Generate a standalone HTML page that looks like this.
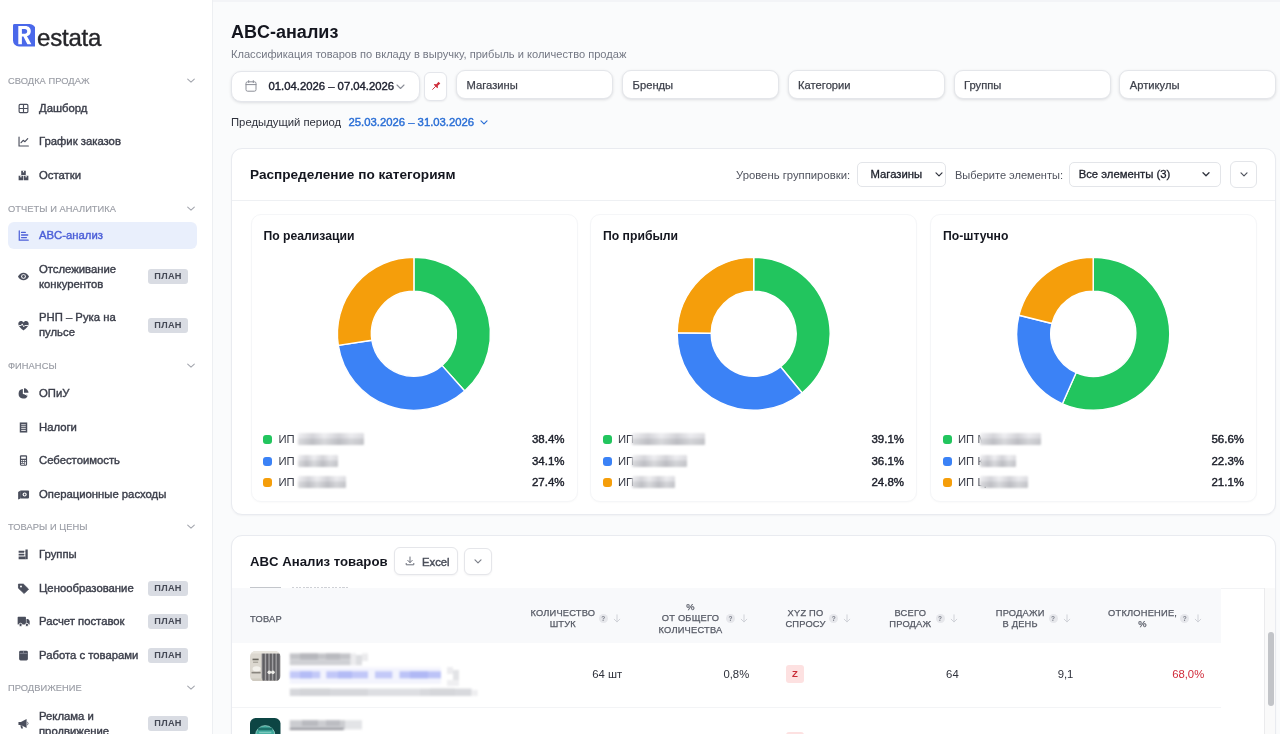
<!DOCTYPE html>
<html lang="ru">
<head>
<meta charset="utf-8">
<title>ABC-анализ</title>
<style>
*{box-sizing:border-box;margin:0;padding:0}
html,body{width:1280px;height:734px;overflow:hidden}
body{font-family:"Liberation Sans",sans-serif;background:#fafbfc;color:#1c1f2a;position:relative;font-size:11.3px}
#w{position:absolute;left:0;top:0;width:1280px;height:734px;overflow:hidden;will-change:transform;background:#fafbfc}
.abs{position:absolute}
/* ---------- sidebar ---------- */
#side{position:absolute;left:0;top:0;width:213px;height:734px;background:#fff;border-right:1px solid #edeff2}
.logoR{position:absolute;left:12px;top:24px;width:23px;height:23px;background:#4a68ea;border-radius:4px 7px 0 5px;color:#fff;font-weight:bold;font-size:22px;line-height:23px;text-align:center}
.logoT{position:absolute;left:37px;top:23px;font-size:24px;line-height:30px;color:#26262a;letter-spacing:-0.2px;-webkit-text-stroke:0.4px #26262a}
.sec{position:absolute;left:8px;font-size:9.3px;line-height:12px;color:#9a9da5;-webkit-text-stroke:.15px #9a9da5;letter-spacing:0.05px;white-space:nowrap}
.chev{position:absolute;left:186px;width:10px;height:6px}
.it{position:absolute;left:39px;font-size:11.3px;line-height:15px;color:#3b3e4a;-webkit-text-stroke:0.4px #3b3e4a;white-space:nowrap}
.ic{position:absolute;left:17px;width:13px;height:13px}
.plan{position:absolute;left:148px;width:40px;height:15px;border-radius:3px;background:#d9dce3;color:#454955;font-size:9.2px;font-weight:bold;line-height:15px;text-align:center;letter-spacing:0.3px}
.active{position:absolute;left:8px;top:222px;width:189px;height:27px;border-radius:6px;background:#e9effc}
/* ---------- main ---------- */
h1{position:absolute;left:231px;top:20.7px;font-size:18px;line-height:22px;font-weight:bold;color:#14161f}
.sub{position:absolute;left:231px;top:46.5px;font-size:11.1px;line-height:14px;color:#747884;white-space:nowrap}
.fbox{position:absolute;top:70px;height:29.3px;width:157px;background:#fff;border:1px solid #e4e6ea;border-radius:9px;box-shadow:0 1px 3px rgba(20,25,40,.13);font-size:11.2px;line-height:28.5px;padding-left:9.6px;color:#3f424c;-webkit-text-stroke:.25px #3f424c}
.card{position:absolute;background:#fff;border:1px solid #e9ebf0;border-radius:11px;box-shadow:0 1px 2px rgba(20,25,40,.04)}
.med{-webkit-text-stroke:0.42px currentColor}
.sel{position:absolute;background:#fff;border:1px solid #e3e5e9;-webkit-text-stroke:.3px #1c1f2a;border-radius:5px;font-size:11.3px;line-height:22.5px;color:#1c1f2a;white-space:nowrap}
.blur{position:absolute;border-radius:1px;background:linear-gradient(90deg,rgba(255,255,255,.25),rgba(120,120,130,.18) 22%,rgba(255,255,255,.2) 40%,rgba(120,120,130,.2) 62%,rgba(255,255,255,.1) 80%,rgba(120,120,130,.12)),linear-gradient(180deg,#ededf0 0,#e6e6ea 42%,#cfd0d4 50%,#cbccd0 100%);filter:blur(.9px)}
.th{position:absolute;font-size:9.3px;line-height:12px;color:#565a65;-webkit-text-stroke:.25px #565a65;text-align:center;white-space:nowrap;letter-spacing:.2px}
.q{position:absolute;width:9px;height:9px;border-radius:50%;background:#e6e7eb;color:#7b7f8a;font-size:6.5px;font-weight:bold;line-height:9px;text-align:center}
</style>
</head>
<body>
<div id="w">
<!-- SIDEBAR -->
<div id="side">
  <svg class="abs" style="left:12.5px;top:24px;width:22.6px;height:22.6px" viewBox="0 0 22.6 22.6"><path d="M1.5 0H16.6a6 6 0 0 1 6 6V22.1a.5.5 0 0 1-.5.5H6a6 6 0 0 1-6-6V1.5A1.5 1.5 0 0 1 1.5 0z" fill="#4a68ea"/><path fill-rule="evenodd" d="M5.3 20.2V2H12.2C15.8 2 17.8 4.2 17.8 7.2 17.8 9.8 16.4 11.6 14 12.2L18.4 20.2H14.4L10.4 12.6H8.9V20.2ZM8.9 5V9.7H11.9C13.5 9.7 14.2 8.7 14.2 7.35 14.2 6 13.5 5 11.9 5Z" fill="#fff"/></svg><div class="logoT">estata</div>
  <!--SB-->
  <div class="sec" style="top:74.7px">СВОДКА ПРОДАЖ</div><svg class="chev" style="top:77.7px" viewBox="0 0 10 6"><path d="M1.7 1.2l3.3 2.9 3.3-2.9" fill="none" stroke="#a3a6ae" stroke-width="1.1" stroke-linecap="round" stroke-linejoin="round"/></svg>
  <svg class="ic" style="top:101.5px" viewBox="0 0 16 16"><rect x="2.6" y="3" width="10.8" height="10" rx="1.3" fill="none" stroke="#4a4e5c" stroke-width="1.4"/><path d="M8 3v10M2.6 8h10.8" stroke="#4a4e5c" stroke-width="1.4"/></svg>
  <div class="it" style="top:100.5px">Дашборд</div>
  <svg class="ic" style="top:134.9px" viewBox="0 0 16 16"><path d="M2.5 2.5v11h11.5" fill="none" stroke="#4a4e5c" stroke-width="1.4" stroke-linecap="round"/><path d="M5 9.5l2.6-3 2.2 1.8 3.4-3.8" fill="none" stroke="#4a4e5c" stroke-width="1.4" stroke-linecap="round" stroke-linejoin="round"/></svg>
  <div class="it" style="top:133.9px">График заказов</div>
  <svg class="ic" style="top:168.5px" viewBox="0 0 16 16"><path d="M5.2 2.2h5.6v5.2H5.2zM2 8.4h5.6v5.4H2zM8.4 8.4H14v5.4H8.4z" fill="#4a4e5c"/><path d="M7.3 2.2h1.4v2.2l-.7-.5-.7.5zM4.1 8.4h1.4v2.2l-.7-.5-.7.5zM10.5 8.4h1.4v2.2l-.7-.5-.7.5z" fill="#fff"/></svg>
  <div class="it" style="top:167.5px">Остатки</div>
  <div class="sec" style="top:202.6px">ОТЧЕТЫ И АНАЛИТИКА</div><svg class="chev" style="top:205.6px" viewBox="0 0 10 6"><path d="M1.7 1.2l3.3 2.9 3.3-2.9" fill="none" stroke="#a3a6ae" stroke-width="1.1" stroke-linecap="round" stroke-linejoin="round"/></svg>
  <div class="active"></div>
  <svg class="ic" style="top:229.2px" viewBox="0 0 16 16"><path d="M2.8 2.2v11.6h11" fill="none" stroke="#4c5fd8" stroke-width="1.5" stroke-linecap="round"/><path d="M5.6 4.2h4.6M5.6 7.4h7.6M5.6 10.6h6" stroke="#4c5fd8" stroke-width="1.6" stroke-linecap="round"/></svg>
  <div class="it" style="top:228.2px;color:#4c5fd8;-webkit-text-stroke-color:#4c5fd8">ABC-анализ</div>
  <svg class="ic" style="top:270.3px" viewBox="0 0 16 16"><path d="M1.2 8C2.8 4.9 5.2 3.3 8 3.3s5.2 1.6 6.8 4.7c-1.6 3.1-4 4.7-6.8 4.7S2.8 11.1 1.2 8z" fill="#4a4e5c"/><circle cx="8" cy="8" r="2.9" fill="#fff"/><circle cx="8" cy="8" r="1.7" fill="#4a4e5c"/></svg>
  <div class="it" style="top:261.6px;line-height:15.3px">Отслеживание<br>конкурентов</div>
  <div class="plan" style="top:269.3px">ПЛАН</div>
  <svg class="ic" style="top:318.7px" viewBox="0 0 16 16"><path d="M8 14S1.6 10.2 1.6 5.9C1.6 3.9 3.1 2.5 4.9 2.5c1.3 0 2.4.7 3.1 1.8.7-1.1 1.8-1.8 3.1-1.8 1.8 0 3.3 1.4 3.3 3.4C14.4 10.2 8 14 8 14z" fill="#4a4e5c"/><path d="M2.2 8h3l1.2-2 1.9 3.6 1.3-1.6h4" fill="none" stroke="#fff" stroke-width="1.1" stroke-linejoin="round"/></svg>
  <div class="it" style="top:309.9px;line-height:15.3px">РНП – Рука на<br>пульсе</div>
  <div class="plan" style="top:317.7px">ПЛАН</div>
  <div class="sec" style="top:360.1px">ФИНАНСЫ</div><svg class="chev" style="top:363.1px" viewBox="0 0 10 6"><path d="M1.7 1.2l3.3 2.9 3.3-2.9" fill="none" stroke="#a3a6ae" stroke-width="1.1" stroke-linecap="round" stroke-linejoin="round"/></svg>
  <svg class="ic" style="top:387.2px" viewBox="0 0 16 16"><path d="M7.2 2.6A5.8 5.8 0 1 0 13.4 9.7L7.2 8.6z" fill="#4a4e5c"/><path d="M8.6 1.6v5.6h5.6A5.7 5.7 0 0 0 8.6 1.6z" fill="#4a4e5c"/><path d="M9.4 8.6l4.4 2.6" stroke="#fff" stroke-width="1"/></svg>
  <div class="it" style="top:386.2px">ОПиУ</div>
  <svg class="ic" style="top:420.5px" viewBox="0 0 16 16"><path d="M3.4 1.8h9.2v12.4H3.4z" fill="#4a4e5c"/><path d="M5.2 4.6h5.6M5.2 7h5.6M5.2 9.4h5.6M5.2 11.7h5.6" stroke="#fff" stroke-width="1"/></svg>
  <div class="it" style="top:419.5px">Налоги</div>
  <svg class="ic" style="top:454.2px" viewBox="0 0 16 16"><rect x="3.6" y="1.6" width="8.8" height="12.8" rx="1.4" fill="#4a4e5c"/><rect x="5.1" y="3.2" width="5.8" height="2.6" fill="#fff"/><path d="M5.1 7.4h1.4v1.4H5.1zM7.3 7.4h1.4v1.4H7.3zM9.5 7.4h1.4v1.4H9.5zM5.1 9.7h1.4v1.4H5.1zM7.3 9.7h1.4v1.4H7.3zM9.5 9.7h1.4v3.4H9.5zM5.1 11.9h3.6v1.3H5.1z" fill="#fff"/></svg>
  <div class="it" style="top:453.2px">Себестоимость</div>
  <svg class="ic" style="top:487.7px" viewBox="0 0 16 16"><path d="M1.4 4.8l3-1.6v9.6l-3 1.2z" fill="#4a4e5c"/><rect x="4" y="3.2" width="10.8" height="9.6" rx="1" fill="#4a4e5c"/><circle cx="9.4" cy="8" r="2.5" fill="#fff"/><circle cx="9.4" cy="8" r="1.1" fill="#4a4e5c"/></svg>
  <div class="it" style="top:486.7px">Операционные расходы</div>
  <div class="sec" style="top:521.2px">ТОВАРЫ И ЦЕНЫ</div><svg class="chev" style="top:524.2px" viewBox="0 0 10 6"><path d="M1.7 1.2l3.3 2.9 3.3-2.9" fill="none" stroke="#a3a6ae" stroke-width="1.1" stroke-linecap="round" stroke-linejoin="round"/></svg>
  <svg class="ic" style="top:547.8px" viewBox="0 0 16 16"><path d="M2 3.4h6.8v2.4H2zM2 7.2h6.8v2H2zM2 10.4h8.6v3.4H2z" fill="#4a4e5c"/><path d="M10.4 1.8h2.8v12h-2.8z" fill="#4a4e5c"/><path d="M10.4 4.2h-1M10.4 8.2h-1" stroke="#4a4e5c" stroke-width="1"/></svg>
  <div class="it" style="top:546.8px">Группы</div>
  <svg class="ic" style="top:581.7px" viewBox="0 0 16 16"><path d="M1.8 2.6h6l6.4 6.2-5.4 5.4-7-6.6z" fill="#4a4e5c" stroke="#4a4e5c" stroke-width="1" stroke-linejoin="round"/><circle cx="4.9" cy="5.5" r="1.2" fill="#fff"/></svg>
  <div class="it" style="top:580.7px">Ценообразование</div>
  <div class="plan" style="top:580.7px">ПЛАН</div>
  <svg class="ic" style="top:615.1px" viewBox="0 0 16 16"><path d="M1.6 2.2h8.6a.8.8 0 0 1 .8.8v8.6H.8V3a.8.8 0 0 1 .8-.8z" fill="#4a4e5c"/><path d="M11.6 4.8h2.2l1.8 2.6v4.2h-4z" fill="#4a4e5c"/><circle cx="4.4" cy="12.2" r="2" fill="#4a4e5c" stroke="#fff" stroke-width="1"/><circle cx="12.2" cy="12.2" r="2" fill="#4a4e5c" stroke="#fff" stroke-width="1"/></svg>
  <div class="it" style="top:614.1px">Расчет поставок</div>
  <div class="plan" style="top:614.1px">ПЛАН</div>
  <svg class="ic" style="top:648.7px" viewBox="0 0 16 16"><rect x="2.6" y="2" width="10.8" height="12" rx="1.8" fill="#4a4e5c"/><path d="M3.2 5.4h9.6" stroke="#8d909c" stroke-width="1"/><path d="M8 2.4v2.6" stroke="#8d909c" stroke-width=".9"/></svg>
  <div class="it" style="top:647.7px">Работа с товарами</div>
  <div class="plan" style="top:647.7px">ПЛАН</div>
  <div class="sec" style="top:682.4px">ПРОДВИЖЕНИЕ</div><svg class="chev" style="top:685.4px" viewBox="0 0 10 6"><path d="M1.7 1.2l3.3 2.9 3.3-2.9" fill="none" stroke="#a3a6ae" stroke-width="1.1" stroke-linecap="round" stroke-linejoin="round"/></svg>
  <svg class="ic" style="top:716.8px" viewBox="0 0 16 16"><path d="M1.8 6.2h3l7-3.6v10.8l-7-3.6h-3z" fill="#4a4e5c"/><path d="M4 10.2h2.4l1 3.8H5.2z" fill="#4a4e5c"/><path d="M13 6.4c1 .4 1 2.8 0 3.2" fill="none" stroke="#4a4e5c" stroke-width="1.1" stroke-linecap="round"/></svg>
  <div class="it" style="top:708.6px;line-height:15.3px">Реклама и<br>продвижение</div>
  <div class="plan" style="top:715.8px">ПЛАН</div>
  <!--/SB-->
</div>
<!-- MAIN -->
<div class="abs" style="left:213px;top:0;width:1067px;height:1.5px;background:#f3f4f7"></div>
<h1>ABC-анализ</h1>
<div class="sub">Классификация товаров по вкладу в выручку, прибыль и количество продаж</div>
<!--M1-->
<div class="abs" style="left:231px;top:70.5px;width:189px;height:31.5px;background:#fff;border:1px solid #e4e6eb;border-radius:10px;box-shadow:0 1px 3px rgba(20,25,40,.12)"></div>
<svg class="abs" style="left:245px;top:80px;width:12px;height:12px" viewBox="0 0 12 12"><rect x="1" y="1.8" width="10" height="9.4" rx="1.6" fill="none" stroke="#8b8e97" stroke-width="1"/><path d="M1 4.6h10M3.7 .6v2M8.3 .6v2" stroke="#8b8e97" stroke-width="1" stroke-linecap="round"/></svg>
<div class="abs med" style="left:268.5px;top:79px;font-size:11.3px;line-height:14px;color:#1f2230;white-space:nowrap">01.04.2026 – 07.04.2026</div>
<svg class="abs" style="left:396px;top:83.5px;width:9px;height:6px" viewBox="0 0 9 6"><path d="M1 1l3.5 3.5L8 1" fill="none" stroke="#8b8e97" stroke-width="1.1" stroke-linecap="round" stroke-linejoin="round"/></svg>
<div class="abs" style="left:424px;top:72px;width:23px;height:28.5px;background:#fff;border:1px solid #e4e6eb;border-radius:6px;box-shadow:0 1px 2px rgba(20,25,40,.06)"></div>
<svg class="abs" style="left:431px;top:80.8px;width:10px;height:10px" viewBox="0 0 10 10"><g transform="rotate(45 5 5)"><path d="M3.7 .2h2.6l-.3 3.3 1.5 1.2v.9H2.5v-.9l1.5-1.2z" fill="#cf2f3c"/><path d="M5 5.6v4.2" stroke="#cf2f3c" stroke-width=".9" stroke-linecap="round"/></g></svg>
<div class="fbox" style="left:456px">Магазины</div>
<div class="fbox" style="left:622px">Бренды</div>
<div class="fbox" style="left:787.5px">Категории</div>
<div class="fbox" style="left:953.5px">Группы</div>
<div class="fbox" style="left:1119.2px">Артикулы</div>
<div class="abs" style="left:231px;top:115px;font-size:11.3px;line-height:14px;color:#2e313c;white-space:nowrap">Предыдущий период</div>
<div class="abs med" style="left:348.5px;top:115px;font-size:11.3px;line-height:14px;color:#2b6fd6;-webkit-text-stroke-color:#2b6fd6;white-space:nowrap">25.03.2026 – 31.03.2026</div>
<svg class="abs" style="left:480px;top:119.5px;width:8px;height:5px" viewBox="0 0 8 5"><path d="M1 .8l3 3 3-3" fill="none" stroke="#2b6fd6" stroke-width="1.2" stroke-linecap="round" stroke-linejoin="round"/></svg>
<div class="card" style="left:231px;top:148px;width:1045px;height:367px"></div>
<div class="abs" style="left:232px;top:200px;width:1043px;height:1px;background:#eef0f3"></div>
<div class="abs" style="left:250px;top:166px;font-size:13.6px;line-height:17px;font-weight:bold;color:#14161f;white-space:nowrap">Распределение по категориям</div>
<div class="abs" style="left:736px;top:168px;font-size:11.3px;line-height:14px;color:#50535e;white-space:nowrap">Уровень группировки:</div>
<div class="sel" style="left:857px;top:162px;width:88.5px;height:24.5px;padding-left:12.5px">Магазины</div>
<svg class="abs" style="left:935px;top:172px;width:8px;height:5px" viewBox="0 0 8 5"><path d="M1 .8l3 3 3-3" fill="none" stroke="#30333d" stroke-width="1.2" stroke-linecap="round" stroke-linejoin="round"/></svg>
<div class="abs" style="left:955px;top:168px;font-size:11.05px;line-height:14px;color:#50535e;white-space:nowrap">Выберите элементы:</div>
<div class="sel" style="left:1069px;top:162px;width:151.5px;height:24.5px;padding-left:8.7px">Все элементы (3)</div>
<svg class="abs" style="left:1201.5px;top:172px;width:8px;height:5px" viewBox="0 0 8 5"><path d="M1 .8l3 3 3-3" fill="none" stroke="#30333d" stroke-width="1.3" stroke-linecap="round" stroke-linejoin="round"/></svg>
<div class="sel" style="left:1230px;top:161px;width:27px;height:26.5px;border-radius:6px"></div>
<svg class="abs" style="left:1239.5px;top:172px;width:8px;height:5px" viewBox="0 0 8 5"><path d="M1 .8l3 3 3-3" fill="none" stroke="#50535e" stroke-width="1.2" stroke-linecap="round" stroke-linejoin="round"/></svg>
<div class="abs" style="left:250.5px;top:214px;width:327px;height:288px;border:1px solid #f5f6f8;border-radius:10px;background:#fff;box-shadow:0 1px 2px rgba(20,25,40,.025)"></div>
<div class="abs" style="left:263.5px;top:228.5px;font-size:12.2px;line-height:15px;font-weight:bold;color:#14161f;white-space:nowrap">По реализации</div>
<div class="abs" style="left:262.7px;top:435.2px;width:9.2px;height:9px;border-radius:3px;background:#22c55e"></div>
<div class="abs" style="left:278.5px;top:432.3px;font-size:11.3px;line-height:14px;color:#3a3d48;white-space:nowrap">ИП</div>
<div class="abs med" style="left:464.5px;top:432.3px;width:100px;text-align:right;font-size:11.5px;line-height:14px;color:#1c1f2a;white-space:nowrap">38.4%</div>
<div class="abs" style="left:262.7px;top:456.5px;width:9.2px;height:9px;border-radius:3px;background:#3b82f6"></div>
<div class="abs" style="left:278.5px;top:454.0px;font-size:11.3px;line-height:14px;color:#3a3d48;white-space:nowrap">ИП</div>
<div class="abs med" style="left:464.5px;top:454.0px;width:100px;text-align:right;font-size:11.5px;line-height:14px;color:#1c1f2a;white-space:nowrap">34.1%</div>
<div class="abs" style="left:262.7px;top:477.9px;width:9.2px;height:9px;border-radius:3px;background:#f59e0b"></div>
<div class="abs" style="left:278.5px;top:475.4px;font-size:11.3px;line-height:14px;color:#3a3d48;white-space:nowrap">ИП</div>
<div class="abs med" style="left:464.5px;top:475.4px;width:100px;text-align:right;font-size:11.5px;line-height:14px;color:#1c1f2a;white-space:nowrap">27.4%</div>
<div class="abs" style="left:590px;top:214px;width:327px;height:288px;border:1px solid #f5f6f8;border-radius:10px;background:#fff;box-shadow:0 1px 2px rgba(20,25,40,.025)"></div>
<div class="abs" style="left:603px;top:228.5px;font-size:12.2px;line-height:15px;font-weight:bold;color:#14161f;white-space:nowrap">По прибыли</div>
<div class="abs" style="left:602.6px;top:435.2px;width:9.2px;height:9px;border-radius:3px;background:#22c55e"></div>
<div class="abs" style="left:618px;top:432.3px;font-size:11.3px;line-height:14px;color:#3a3d48;white-space:nowrap">ИП</div>
<div class="abs med" style="left:804px;top:432.3px;width:100px;text-align:right;font-size:11.5px;line-height:14px;color:#1c1f2a;white-space:nowrap">39.1%</div>
<div class="abs" style="left:602.6px;top:456.5px;width:9.2px;height:9px;border-radius:3px;background:#3b82f6"></div>
<div class="abs" style="left:618px;top:454.0px;font-size:11.3px;line-height:14px;color:#3a3d48;white-space:nowrap">ИП</div>
<div class="abs med" style="left:804px;top:454.0px;width:100px;text-align:right;font-size:11.5px;line-height:14px;color:#1c1f2a;white-space:nowrap">36.1%</div>
<div class="abs" style="left:602.6px;top:477.9px;width:9.2px;height:9px;border-radius:3px;background:#f59e0b"></div>
<div class="abs" style="left:618px;top:475.4px;font-size:11.3px;line-height:14px;color:#3a3d48;white-space:nowrap">ИП</div>
<div class="abs med" style="left:804px;top:475.4px;width:100px;text-align:right;font-size:11.5px;line-height:14px;color:#1c1f2a;white-space:nowrap">24.8%</div>
<div class="abs" style="left:930px;top:214px;width:327px;height:288px;border:1px solid #f5f6f8;border-radius:10px;background:#fff;box-shadow:0 1px 2px rgba(20,25,40,.025)"></div>
<div class="abs" style="left:943px;top:228.5px;font-size:12.2px;line-height:15px;font-weight:bold;color:#14161f;white-space:nowrap">По-штучно</div>
<div class="abs" style="left:942.8px;top:435.2px;width:9.2px;height:9px;border-radius:3px;background:#22c55e"></div>
<div class="abs" style="left:958px;top:432.3px;font-size:11.3px;line-height:14px;color:#3a3d48;white-space:nowrap">ИП М</div>
<div class="abs med" style="left:1144px;top:432.3px;width:100px;text-align:right;font-size:11.5px;line-height:14px;color:#1c1f2a;white-space:nowrap">56.6%</div>
<div class="abs" style="left:942.8px;top:456.5px;width:9.2px;height:9px;border-radius:3px;background:#3b82f6"></div>
<div class="abs" style="left:958px;top:454.0px;font-size:11.3px;line-height:14px;color:#3a3d48;white-space:nowrap">ИП К</div>
<div class="abs med" style="left:1144px;top:454.0px;width:100px;text-align:right;font-size:11.5px;line-height:14px;color:#1c1f2a;white-space:nowrap">22.3%</div>
<div class="abs" style="left:942.8px;top:477.9px;width:9.2px;height:9px;border-radius:3px;background:#f59e0b"></div>
<div class="abs" style="left:958px;top:475.4px;font-size:11.3px;line-height:14px;color:#3a3d48;white-space:nowrap">ИП Ц</div>
<div class="abs med" style="left:1144px;top:475.4px;width:100px;text-align:right;font-size:11.5px;line-height:14px;color:#1c1f2a;white-space:nowrap">21.1%</div>
<div class="blur" style="left:297.5px;top:433.3px;width:66px;height:12px"></div>
<div class="blur" style="left:297.5px;top:455.0px;width:40.5px;height:12px"></div>
<div class="blur" style="left:297.5px;top:476.4px;width:48px;height:12px"></div>
<div class="blur" style="left:632.3px;top:433.3px;width:72.7px;height:12px"></div>
<div class="blur" style="left:632.3px;top:455.0px;width:54.5px;height:12px"></div>
<div class="blur" style="left:632.3px;top:476.4px;width:42.7px;height:12px"></div>
<div class="blur" style="left:980.2px;top:433.3px;width:60.5px;height:12px"></div>
<div class="blur" style="left:980.2px;top:455.0px;width:35.7px;height:12px"></div>
<div class="blur" style="left:980.2px;top:476.4px;width:47.5px;height:12px"></div>
<svg class="abs" style="left:231px;top:214px;width:1045px;height:288px" viewBox="231 214 1045 288"><path d="M413.9 257.3A76.5 76.5 0 0 1 464.7 391.0L442.1 365.6A42.5 42.5 0 0 0 413.9 291.3Z" fill="#22c55e" stroke="#fff" stroke-width="1.4" stroke-linejoin="round"/><path d="M464.7 391.0A76.5 76.5 0 0 1 338.3 345.4L371.9 340.3A42.5 42.5 0 0 0 442.1 365.6Z" fill="#3b82f6" stroke="#fff" stroke-width="1.4" stroke-linejoin="round"/><path d="M338.3 345.4A76.5 76.5 0 0 1 413.9 257.3L413.9 291.3A42.5 42.5 0 0 0 371.9 340.3Z" fill="#f59e0b" stroke="#fff" stroke-width="1.4" stroke-linejoin="round"/><path d="M753.7 257.3A76.5 76.5 0 0 1 802.1 393.0L780.6 366.7A42.5 42.5 0 0 0 753.7 291.3Z" fill="#22c55e" stroke="#fff" stroke-width="1.4" stroke-linejoin="round"/><path d="M802.1 393.0A76.5 76.5 0 0 1 677.2 332.8L711.2 333.3A42.5 42.5 0 0 0 780.6 366.7Z" fill="#3b82f6" stroke="#fff" stroke-width="1.4" stroke-linejoin="round"/><path d="M677.2 332.8A76.5 76.5 0 0 1 753.7 257.3L753.7 291.3A42.5 42.5 0 0 0 711.2 333.3Z" fill="#f59e0b" stroke="#fff" stroke-width="1.4" stroke-linejoin="round"/><path d="M1093.2 257.3A76.5 76.5 0 1 1 1062.4 403.8L1076.1 372.7A42.5 42.5 0 1 0 1093.2 291.3Z" fill="#22c55e" stroke="#fff" stroke-width="1.4" stroke-linejoin="round"/><path d="M1062.4 403.8A76.5 76.5 0 0 1 1019.0 315.2L1052.0 323.5A42.5 42.5 0 0 0 1076.1 372.7Z" fill="#3b82f6" stroke="#fff" stroke-width="1.4" stroke-linejoin="round"/><path d="M1019.0 315.2A76.5 76.5 0 0 1 1093.2 257.3L1093.2 291.3A42.5 42.5 0 0 0 1052.0 323.5Z" fill="#f59e0b" stroke="#fff" stroke-width="1.4" stroke-linejoin="round"/></svg>
<!--/M1-->
<!--M2-->
<div class="card" style="left:231px;top:534.5px;width:1045px;height:220px;border-radius:11px"></div>
<div class="abs" style="left:250px;top:553px;font-size:13.2px;line-height:17px;font-weight:bold;color:#14161f;white-space:nowrap">ABC Анализ товаров</div>
<div class="abs" style="left:393.8px;top:546.8px;width:64.6px;height:28.6px;background:#fff;border:1px solid #e5e6ea;border-radius:6px;box-shadow:0 1px 2px rgba(20,25,40,.05)"></div>
<svg class="abs" style="left:404.5px;top:556px;width:10px;height:10px" viewBox="0 0 10 10"><path d="M5 1v5.4M2.8 4.4L5 6.6l2.2-2.2M1.2 7.4v1.4h7.6V7.4" fill="none" stroke="#6a6e7a" stroke-width="1" stroke-linecap="round" stroke-linejoin="round"/></svg>
<div class="abs med" style="left:422px;top:554.5px;font-size:11.3px;line-height:14px;color:#4a4e5a;white-space:nowrap">Excel</div>
<div class="abs" style="left:464.2px;top:547.5px;width:27.5px;height:27.3px;background:#fff;border:1px solid #e5e6ea;border-radius:6px;box-shadow:0 1px 2px rgba(20,25,40,.05)"></div>
<svg class="abs" style="left:474px;top:559px;width:8px;height:5px" viewBox="0 0 8 5"><path d="M1 .8l3 3 3-3" fill="none" stroke="#7d808a" stroke-width="1.2" stroke-linecap="round" stroke-linejoin="round"/></svg>


<div class="abs" style="left:232px;top:588px;width:989px;height:54.5px;background:#f8f9fb"></div>
<div class="abs" style="left:249.5px;top:587.4px;width:31px;height:1px;background:#c3c6cb;filter:blur(.4px)"></div>
<div class="abs" style="left:291.5px;top:587.4px;width:57px;height:1px;background:repeating-linear-gradient(90deg,#cfd1d6 0 2.2px,transparent 2.2px 3.6px);filter:blur(.4px)"></div>
<div class="abs" style="left:1264px;top:588px;width:11px;height:146px;background:#fafafa;border-left:1px solid #ebebed"></div>
<div class="abs" style="left:1267.5px;top:632px;width:6.5px;height:73.5px;border-radius:3.5px;background:#c2c4c8"></div>
<div class="th" style="left:250px;top:612.5px;text-align:left">ТОВАР</div>
<div class="th" style="left:502.8px;top:606.6px;width:120px">КОЛИЧЕСТВО</div>
<div class="th" style="left:502.8px;top:617.9px;width:120px">ШТУК</div>
<div class="q" style="left:598.8px;top:613.8px">?</div>
<svg class="abs" style="left:612.8px;top:613.8px;width:8px;height:9px" viewBox="0 0 8 9"><path d="M4 .8v7M1.2 5.2L4 8l2.8-2.8" fill="none" stroke="#d0d2d8" stroke-width="1" stroke-linecap="round" stroke-linejoin="round"/></svg>
<div class="th" style="left:630.5px;top:600.9px;width:120px">%</div>
<div class="th" style="left:630.5px;top:612.2px;width:120px">ОТ ОБЩЕГО</div>
<div class="th" style="left:630.5px;top:623.5px;width:120px">КОЛИЧЕСТВА</div>
<div class="q" style="left:726.0px;top:613.7px">?</div>
<svg class="abs" style="left:740.0px;top:613.7px;width:8px;height:9px" viewBox="0 0 8 9"><path d="M4 .8v7M1.2 5.2L4 8l2.8-2.8" fill="none" stroke="#d0d2d8" stroke-width="1" stroke-linecap="round" stroke-linejoin="round"/></svg>
<div class="th" style="left:745.5px;top:606.6px;width:120px">XYZ ПО</div>
<div class="th" style="left:745.5px;top:617.9px;width:120px">СПРОСУ</div>
<div class="q" style="left:829.2px;top:613.8px">?</div>
<svg class="abs" style="left:843.2px;top:613.8px;width:8px;height:9px" viewBox="0 0 8 9"><path d="M4 .8v7M1.2 5.2L4 8l2.8-2.8" fill="none" stroke="#d0d2d8" stroke-width="1" stroke-linecap="round" stroke-linejoin="round"/></svg>
<div class="th" style="left:850.3px;top:606.6px;width:120px">ВСЕГО</div>
<div class="th" style="left:850.3px;top:617.9px;width:120px">ПРОДАЖ</div>
<div class="q" style="left:935.5px;top:613.8px">?</div>
<svg class="abs" style="left:949.5px;top:613.8px;width:8px;height:9px" viewBox="0 0 8 9"><path d="M4 .8v7M1.2 5.2L4 8l2.8-2.8" fill="none" stroke="#d0d2d8" stroke-width="1" stroke-linecap="round" stroke-linejoin="round"/></svg>
<div class="th" style="left:960.2px;top:606.6px;width:120px">ПРОДАЖИ</div>
<div class="th" style="left:960.2px;top:617.9px;width:120px">В ДЕНЬ</div>
<div class="q" style="left:1048.5px;top:613.8px">?</div>
<svg class="abs" style="left:1062.5px;top:613.8px;width:8px;height:9px" viewBox="0 0 8 9"><path d="M4 .8v7M1.2 5.2L4 8l2.8-2.8" fill="none" stroke="#d0d2d8" stroke-width="1" stroke-linecap="round" stroke-linejoin="round"/></svg>
<div class="th" style="left:1082.6px;top:606.6px;width:120px">ОТКЛОНЕНИЕ,</div>
<div class="th" style="left:1082.6px;top:617.9px;width:120px">%</div>
<div class="q" style="left:1180.2px;top:613.8px">?</div>
<svg class="abs" style="left:1194.2px;top:613.8px;width:8px;height:9px" viewBox="0 0 8 9"><path d="M4 .8v7M1.2 5.2L4 8l2.8-2.8" fill="none" stroke="#d0d2d8" stroke-width="1" stroke-linecap="round" stroke-linejoin="round"/></svg>
<div class="abs" style="left:522.2px;top:666.6px;width:100px;text-align:right;font-size:11.3px;line-height:14px;color:#2e313b;white-space:nowrap">64 шт</div>
<div class="abs" style="left:649.2px;top:666.6px;width:100px;text-align:right;font-size:11.3px;line-height:14px;color:#2e313b;white-space:nowrap">0,8%</div>
<div class="abs" style="left:786px;top:664.5px;width:18px;height:18px;border-radius:3px;background:#fde1e1;color:#c92a35;font-size:9.5px;font-weight:bold;line-height:18px;text-align:center">Z</div>
<div class="abs" style="left:858.7px;top:666.6px;width:100px;text-align:right;font-size:11.3px;line-height:14px;color:#2e313b;white-space:nowrap">64</div>
<div class="abs" style="left:973.4px;top:666.6px;width:100px;text-align:right;font-size:11.3px;line-height:14px;color:#2e313b;white-space:nowrap">9,1</div>
<div class="abs" style="left:1104.2px;top:666.6px;width:100px;text-align:right;font-size:11.3px;line-height:14px;color:#d02b3a;white-space:nowrap">68,0%</div>
<div class="abs" style="left:232px;top:706.5px;width:989px;height:1px;background:#f3f4f6"></div>
<div class="abs" style="left:786px;top:732px;width:18px;height:18px;border-radius:3px;background:#fde1e1"></div>

<svg class="abs" style="left:250px;top:650.5px;width:30.5px;height:30.5px" viewBox="0 0 30 30" preserveAspectRatio="none"><defs><clipPath id="c1"><rect width="30" height="30" rx="5.5"/></clipPath><filter id="b1"><feGaussianBlur stdDeviation=".45"/></filter></defs><g clip-path="url(#c1)"><rect width="30" height="30" fill="#dcd8d0"/><g filter="url(#b1)"><rect x="11.5" y="1" width="18.5" height="28" fill="#77767a"/><path d="M13.5 1v28M17 1v28M20.5 1v28M24 1v28M27.5 1v28" stroke="#5f5e62" stroke-width="1.4"/><path d="M15.2 1v28M18.8 1v28M22.2 1v28M25.8 1v28" stroke="#a3a2a4" stroke-width="1"/><rect x="0" y="0" width="30" height="2.5" fill="#e9e6df"/><rect x="2.5" y="7.5" width="6" height="1.6" fill="#6a6761"/><rect x="3" y="10.5" width="5" height="1" fill="#9a968e"/><ellipse cx="6.5" cy="17.5" rx="4" ry="2.6" fill="#f3f1ec"/><rect x="1.5" y="20.5" width="9" height="1.6" fill="#8a867f"/><circle cx="19" cy="21" r="1.8" fill="#efeeea"/><circle cx="22.5" cy="21" r="1.8" fill="#efeeea"/><rect x="0" y="27" width="12" height="3" fill="#cfcac0"/></g></g></svg>
<svg class="abs" style="left:250px;top:718px;width:30.5px;height:30.5px" viewBox="0 0 30 30" preserveAspectRatio="none"><defs><filter id="b2"><feGaussianBlur stdDeviation=".5"/></filter></defs><rect width="30" height="30" rx="5.5" fill="#0d4544"/><g filter="url(#b2)"><circle cx="15" cy="17" r="9.5" fill="#3fa99c"/><circle cx="15" cy="17" r="9.5" fill="none" stroke="#9fd9cf" stroke-width=".8"/><rect x="8" y="9.5" width="14" height="2.6" fill="#1f6f69"/><rect x="9" y="13.5" width="12" height="1.5" fill="#79c9bd"/></g></svg>
<svg class="abs" style="left:286px;top:650px;width:90px;height:18px;filter:blur(.9px)" viewBox="0 0 90 18"><rect x="3.8" y="3.4" width="60.9" height="6.1" fill="#c3c4c8"/><rect x="3.8" y="9.5" width="60.9" height="5.8" fill="#cfd0d4"/><rect x="14.0" y="3.4" width="18.0" height="6.1" fill="#b6b7bc"/><rect x="40.0" y="3.4" width="14.0" height="6.1" fill="#b9babf"/><rect x="64.7" y="3.4" width="5.3" height="11.9" fill="#ececee"/><rect x="70.0" y="5.0" width="6.0" height="10.3" fill="#dddee1"/><rect x="76.0" y="3.4" width="6.0" height="7.6" fill="#ebebed"/></svg>
<svg class="abs" style="left:286px;top:664px;width:196px;height:24px;filter:blur(.9px)" viewBox="0 0 196 24"><rect x="3.8" y="3.4" width="151.2" height="16.3" fill="#f3f4fd"/><rect x="3.8" y="7.3" width="30.4" height="7.0" fill="#c3c9f8"/><rect x="40.3" y="7.3" width="41.7" height="7.0" fill="#c1c7f8"/><rect x="89.0" y="7.3" width="17.3" height="7.0" fill="#c3c9f8"/><rect x="113.5" y="7.3" width="41.5" height="7.0" fill="#bcc3f7"/><rect x="14.0" y="7.3" width="12.0" height="7.0" fill="#b4bcf6"/><rect x="52.0" y="7.3" width="14.0" height="7.0" fill="#b3bbf6"/><rect x="124.0" y="7.3" width="18.0" height="7.0" fill="#b0b8f5"/><rect x="161.0" y="3.0" width="6.0" height="7.0" fill="#ececef"/><rect x="167.0" y="6.0" width="6.0" height="10.0" fill="#e2e3e6"/><rect x="161.0" y="16.0" width="12.0" height="6.0" fill="#efeff1"/></svg>
<svg class="abs" style="left:286px;top:684px;width:200px;height:16px;filter:blur(.9px)" viewBox="0 0 200 16"><rect x="3.8" y="4.6" width="78.2" height="7.4" fill="#d6d7db"/><rect x="82.0" y="4.6" width="52.0" height="7.4" fill="#dddee2"/><rect x="134.0" y="4.6" width="51.6" height="7.4" fill="#d8d9dd"/><rect x="185.6" y="6.0" width="6.1" height="6.0" fill="#eeeef0"/><rect x="14.0" y="4.6" width="30.0" height="7.4" fill="#d3d4d8"/><rect x="144.0" y="4.6" width="25.0" height="7.4" fill="#d5d6da"/></svg>
<svg class="abs" style="left:286px;top:716px;width:90px;height:18px;filter:blur(.9px)" viewBox="0 0 90 18"><rect x="3.8" y="4.2" width="55.2" height="9.2" fill="#cbccd0"/><rect x="59.0" y="4.2" width="17.0" height="9.2" fill="#e3e4e7"/><rect x="16.0" y="4.2" width="16.0" height="5.8" fill="#b9babf"/><rect x="40.0" y="4.2" width="14.0" height="5.8" fill="#bcbdc2"/><rect x="3.8" y="12.3" width="53.8" height="1.7" fill="#8b8c93"/></svg>
<div class="abs" style="left:1221px;top:588px;width:43px;height:1px;background:#f2f3f5"></div>
<!--/M2-->
</div>
</body>
</html>
